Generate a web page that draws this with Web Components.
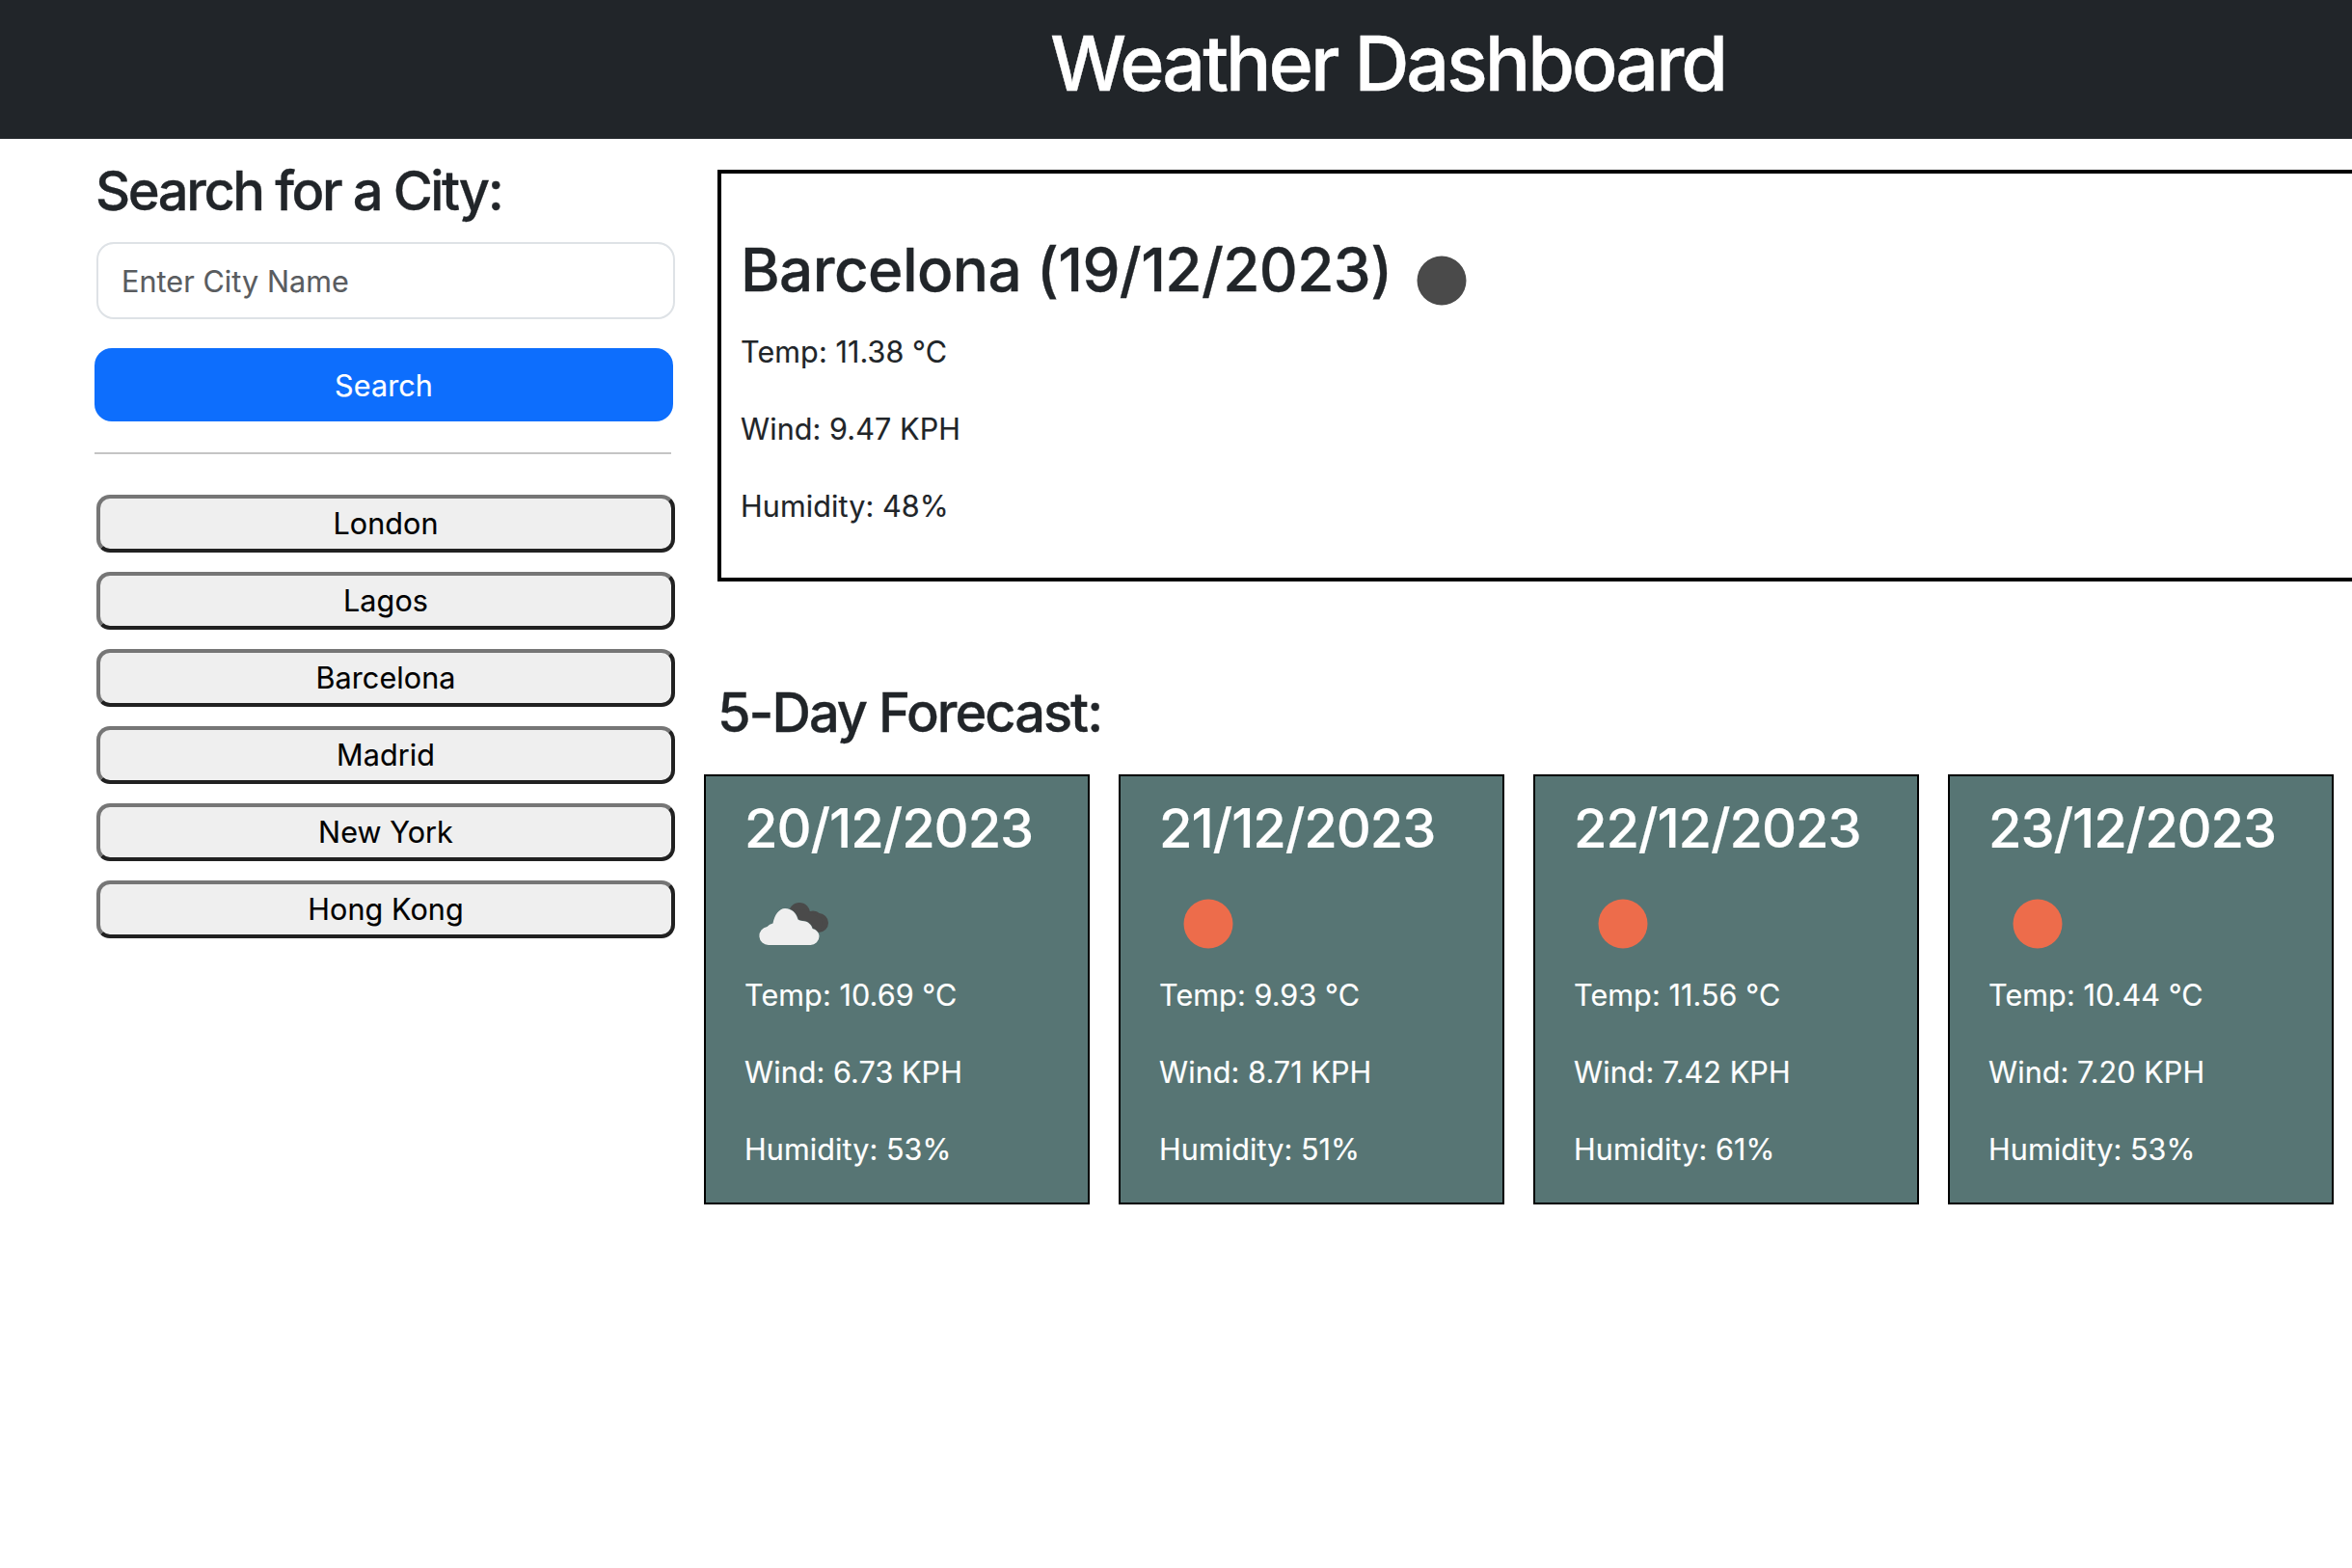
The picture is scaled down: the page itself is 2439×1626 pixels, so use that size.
<!DOCTYPE html>
<html lang="en"><head><meta charset="utf-8"><title>Weather Dashboard</title>
<style>
html,body{margin:0;padding:0;background:#fff;overflow:hidden;height:100%}
body{font-family:Inter,"Liberation Sans",sans-serif;color:#212529;font-size:30.5px;letter-spacing:.1px;-webkit-text-stroke:.15px currentColor}
</style></head><body>
<weather-app></weather-app>
<script>
const base=`*{box-sizing:border-box}`;
function def(name,html){customElements.define(name,class extends HTMLElement{connectedCallback(){if(this.shadowRoot)return;const r=this.attachShadow({mode:'open'});r.innerHTML=typeof html==='function'?html(this):html;}});}

def('weather-icon',el=>{const k=el.getAttribute('kind');const art={
sun:`<circle cx="50" cy="50" r="25.5" fill="#ed6c4b"/>`,
moon:`<circle cx="50" cy="50" r="25.5" fill="#4a4a4a"/>`,
cloud:`<g transform="translate(-10 0)"><g fill="#4a4a4a"><circle cx="66" cy="39" r="11"/><circle cx="80" cy="47" r="10.5"/><circle cx="86" cy="49" r="10"/><path d="M60 35 74 36 90 45 88 58 72 56z"/></g>
<g fill="#efefef" stroke="#577574" stroke-width=".8" paint-order="stroke"><path d="M34 72a9.5 9.5 0 0 1-1.5-18.900 11 11 0 0 1 6-3.600C40 41 45 34 51 34c7 0 12 5 13.500 11.500 1 .5 3 1.500 4.500 1.500 6 0 10 4.500 10.500 8 4 1 7 4 7 8a9 9 0 0 1-9 9z"/></g></g>`}[k];
return `<style>:host{display:block;width:100px;height:100px}svg{display:block;filter:blur(.6px)}</style><svg width="100" height="100" viewBox="0 0 100 100">${art}</svg>`;});

def('weather-header',`<style>${base}:host{display:block;background:#212529;height:144px;padding-left:1089px;color:#fff}
h1{margin:0;font-size:79px;font-weight:500;line-height:130px;letter-spacing:-3.05px;white-space:nowrap;-webkit-text-stroke:.4px #fff}</style><h1><slot></slot></h1>`);

def('city-button',`<style>${base}:host{display:block;margin-bottom:20px}
button{display:block;width:600px;height:60px;margin-left:2px;padding:0 0 2px;font:inherit;letter-spacing:inherit;color:#000;background:#efefef;border:4px solid;border-color:#767676 #212121 #212121 #767676;border-radius:14px}</style><button><slot></slot></button>`);

def('search-panel',`<style>${base}:host{display:block;padding-left:98px}
h2{margin:21px 0 19px 1px;font-size:56px;line-height:67px;font-weight:500;letter-spacing:-2.4px;white-space:nowrap;-webkit-text-stroke:.35px currentColor}
input{display:block;width:600px;height:80px;margin-left:2px;padding:0 24px;font:inherit;letter-spacing:inherit;border:2px solid #dee2e6;border-radius:18px;background:#fff;color:#212529;outline:0}
input::placeholder{color:#595c5f;opacity:1}
.go{display:block;width:600px;height:76px;margin-top:30px;border:0;border-radius:18px;background:#0d6efd;color:#fff;font:inherit;letter-spacing:inherit}
hr{width:598px;height:2px;margin:32px 0 42px;border:0;background:#c4c4c4}
</style><h2>Search for a City:</h2><input placeholder="Enter City Name" aria-label="City"><button class="go">Search</button><hr><slot></slot>`);

def('current-weather',`<style>${base}:host{display:block;margin:32px -20px 0 0;height:427px;border:4px solid #000;padding:63px 0 0 20px}
.head{display:flex;align-items:flex-start;height:74px;margin-bottom:27px}
h2{margin:0;font-size:62px;line-height:74px;font-weight:500;letter-spacing:-.6px;white-space:nowrap;-webkit-text-stroke:.35px currentColor}
weather-icon{margin:-2.500px 0 0 2px}
::slotted(p){margin:0 0 38px;line-height:42px}
</style><div class="head"><h2><slot name="title"></slot></h2><weather-icon kind="moon"></weather-icon></div><slot></slot>`);

def('forecast-card',`<style>${base}:host{display:block;width:400px;height:446px;background:#577574;border:2px solid #000;color:#fff;padding:21px 0 0 40px;flex:none}
h3{margin:0 0 15px;font-size:56px;line-height:67px;font-weight:500;letter-spacing:-1.100px;white-space:nowrap}
::slotted(weather-icon){margin:0 0 3px 1px}
::slotted(p){margin:0 0 38px;line-height:42px}
</style><h3><slot name="date"></slot></h3><slot name="icon"></slot><slot></slot>`);

def('forecast-row',`<style>${base}:host{display:flex;gap:30px;margin:29.5px 0 0 -14px}</style><slot></slot>`);

const P=s=>`<p>${s}</p>`;
const card=(d,i,t,w,h)=>`<forecast-card><span slot="date">${d}</span><weather-icon slot="icon" kind="${i}"></weather-icon>${P('Temp: '+t+' °C')}${P('Wind: '+w+' KPH')}${P('Humidity: '+h+'%')}</forecast-card>`;

def('weather-app',`<style>${base}:host{display:block}
.cols{display:grid;grid-template-columns:744px 1fr}
h2{margin:103px 0 0;font-size:56px;line-height:67px;font-weight:500;letter-spacing:-2px;-webkit-text-stroke:.35px currentColor}
</style>
<weather-header>Weather Dashboard</weather-header>
<div class="cols"><search-panel>
${['London','Lagos','Barcelona','Madrid','New York','Hong Kong'].map(c=>`<city-button>${c}</city-button>`).join('')}
</search-panel>
<main><current-weather><span slot="title">Barcelona (19/12/2023)</span>${P('Temp: 11.38 °C')}${P('Wind: 9.47 KPH')}${P('Humidity: 48%')}</current-weather>
<h2>5-Day Forecast:</h2>
<forecast-row>
${card('20/12/2023','cloud','10.69','6.73','53')}
${card('21/12/2023','sun','9.93','8.71','51')}
${card('22/12/2023','sun','11.56','7.42','61')}
${card('23/12/2023','sun','10.44','7.20','53')}
</forecast-row></main></div>`);
</script>
</body></html>
